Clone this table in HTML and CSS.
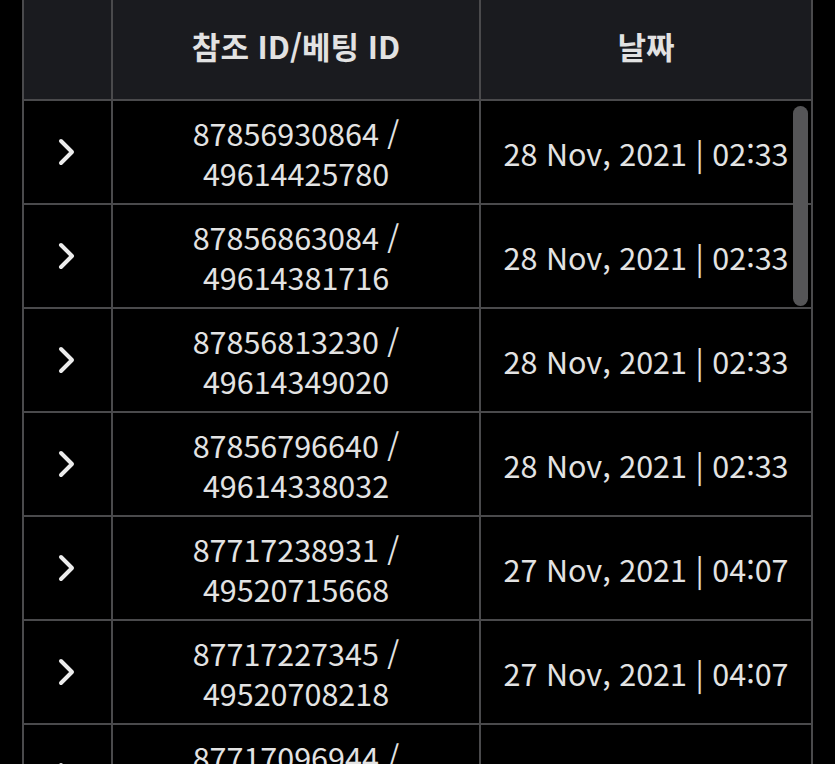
FILE: index.html
```html
<!DOCTYPE html>
<html lang="ko">
<head>
<meta charset="utf-8">
<link rel="stylesheet" href="styles.css">
</head>
<body>
<div class="page">
  <div class="table-wrap">
    <div class="grid">
      <div class="hcell"></div>
      <div class="hcell">참조 ID/베팅 ID</div>
      <div class="hcell">날짜</div>

      <div class="cell"><svg class="chev" viewBox="0 0 18 28"><path d="M3 3 L14 14 L3 25"/></svg></div>
      <div class="cell ids">87856930864 /<br>49614425780</div>
      <div class="cell">28 Nov, 2021 | 02:33</div>

      <div class="cell"><svg class="chev" viewBox="0 0 18 28"><path d="M3 3 L14 14 L3 25"/></svg></div>
      <div class="cell ids">87856863084 /<br>49614381716</div>
      <div class="cell">28 Nov, 2021 | 02:33</div>

      <div class="cell"><svg class="chev" viewBox="0 0 18 28"><path d="M3 3 L14 14 L3 25"/></svg></div>
      <div class="cell ids">87856813230 /<br>49614349020</div>
      <div class="cell">28 Nov, 2021 | 02:33</div>

      <div class="cell"><svg class="chev" viewBox="0 0 18 28"><path d="M3 3 L14 14 L3 25"/></svg></div>
      <div class="cell ids">87856796640 /<br>49614338032</div>
      <div class="cell">28 Nov, 2021 | 02:33</div>

      <div class="cell"><svg class="chev" viewBox="0 0 18 28"><path d="M3 3 L14 14 L3 25"/></svg></div>
      <div class="cell ids">87717238931 /<br>49520715668</div>
      <div class="cell">27 Nov, 2021 | 04:07</div>

      <div class="cell"><svg class="chev" viewBox="0 0 18 28"><path d="M3 3 L14 14 L3 25"/></svg></div>
      <div class="cell ids">87717227345 /<br>49520708218</div>
      <div class="cell">27 Nov, 2021 | 04:07</div>

      <div class="cell"><svg class="chev" viewBox="0 0 18 28"><path d="M3 3 L14 14 L3 25"/></svg></div>
      <div class="cell ids">87717096944 /<br>49520616004</div>
      <div class="cell">27 Nov, 2021 | 03:52</div>
    </div>
    <div class="scrollbar"></div>
  </div>
</div>
</body>
</html>
```

FILE: styles.css
```css
html, body {
  margin: 0;
  padding: 0;
  background: #000;
  height: 764px;
  overflow: hidden;
}
.page {
  padding-left: 22px;
  font-family: "Noto Sans CJK KR", "Noto Sans", sans-serif;
  color: #e3e3e3;
}
.table-wrap {
  position: relative;
  width: 791px;
}
.grid {
  display: grid;
  grid-template-columns: 87px 366px 330px;
  grid-auto-rows: 102px;
  grid-template-rows: 99px;
  gap: 2px;
  padding: 0 2px 2px;
  background: #4a4a4c;
}
.hcell {
  background: #1a1b1f;
  display: flex;
  align-items: center;
  justify-content: center;
  font-weight: 700;
  font-size: 31px;
  color: #e2e2e2;
  padding-bottom: 8px;
  box-sizing: border-box;
}
.cell {
  background: #000;
  display: flex;
  align-items: center;
  justify-content: center;
  text-align: center;
  font-size: 30.5px;
  line-height: 40px;
  padding-top: 2px;
  box-sizing: border-box;
}
.chev {
  width: 18px;
  height: 28px;
  margin-right: 2px;
  margin-top: -2px;
}
.chev path {
  fill: none;
  stroke: #ececec;
  stroke-width: 4;
  stroke-linecap: round;
  stroke-linejoin: round;
}
.scrollbar {
  position: absolute;
  left: 771px;
  top: 106px;
  width: 15px;
  height: 200px;
  border-radius: 8px;
  background: #555557;
}
```
